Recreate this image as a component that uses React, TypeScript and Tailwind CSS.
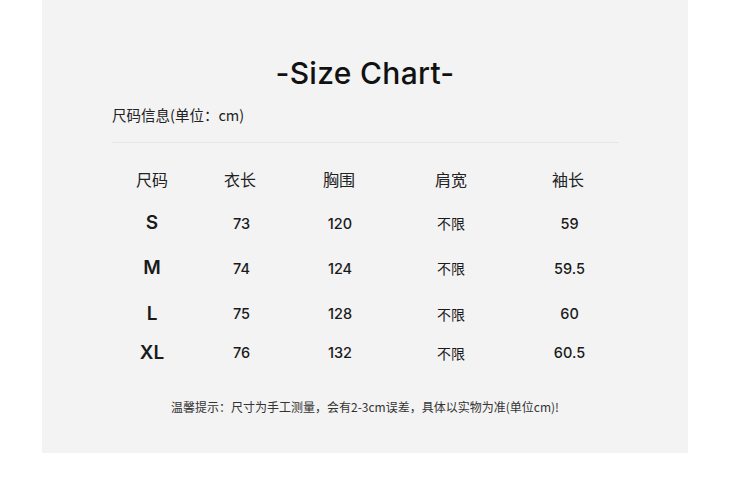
import React from 'react';

const cols = ['w-[80px]', 'w-[96px]', 'w-[102px]', 'w-[122px]', 'w-[112px]'];

const rows = [
  { size: 'S', len: '73', chest: '120', shoulder: '不限', sleeve: '59', h: 'h-[45px]' },
  { size: 'M', len: '74', chest: '124', shoulder: '不限', sleeve: '59.5', h: 'h-[45px]' },
  { size: 'L', len: '75', chest: '128', shoulder: '不限', sleeve: '60', h: 'h-[46px]' },
  { size: 'XL', len: '76', chest: '132', shoulder: '不限', sleeve: '60.5', h: 'h-[32px]' },
];

const cjk = "font-['Noto_Sans_CJK_SC',sans-serif]";
const latin = "font-['Inter','Noto_Sans_CJK_SC',sans-serif]";

const App: React.FC = () => {
  return (
    <div className="w-[750px] h-[488px] bg-white">
      <div className="ml-[42px] w-[646px] bg-[#f3f3f3] pt-[58px] pb-[38px] flex flex-col">
        {/* Title */}
        <h1 className={`${latin} text-[30px] leading-[30px] font-medium text-[#111] text-center tracking-[0.3px]`}>
          -Size Chart-
        </h1>

        {/* Unit */}
        <p className={`${cjk} mt-[17px] ml-[70px] text-[14.5px] leading-[20px] text-[#222]`}>
          尺码信息(单位：cm)
        </p>
        <div className="mt-[17px] ml-[70px] w-[507px] h-px bg-[#e6e6e6]" />

        {/* Table */}
        <div className="mt-[14px] ml-[70px] flex flex-col">
          <div className={`flex h-[44px] items-center ${cjk} text-[16px] text-[#222]`}>
            {['尺码', '衣长', '胸围', '肩宽', '袖长'].map((t, i) => (
              <div key={t} className={`${cols[i]} text-center`}>{t}</div>
            ))}
          </div>
          {rows.map((r) => (
            <div key={r.size} className={`flex ${r.h} items-center text-[#1a1a1a]`}>
              <div className={`${cols[0]} text-center ${latin} text-[19px] font-semibold`}>{r.size}</div>
              <div className={`${cols[1]} text-center pl-[3px] ${latin} text-[14.5px] font-medium`}>{r.len}</div>
              <div className={`${cols[2]} text-center pl-[2px] ${latin} text-[14.5px] font-medium`}>{r.chest}</div>
              <div className={`${cols[3]} text-center ${cjk} text-[14px]`}>{r.shoulder}</div>
              <div className={`${cols[4]} text-center pl-[3px] ${latin} text-[14.5px] font-medium`}>{r.sleeve}</div>
            </div>
          ))}
        </div>

        {/* Note */}
        <p className={`${cjk} mt-[30px] text-[12px] leading-[16px] text-[#333] text-center`}>
          温馨提示：尺寸为手工测量，会有2-3cm误差，具体以实物为准(单位cm)!
        </p>
      </div>
    </div>
  );
};

export default App;
